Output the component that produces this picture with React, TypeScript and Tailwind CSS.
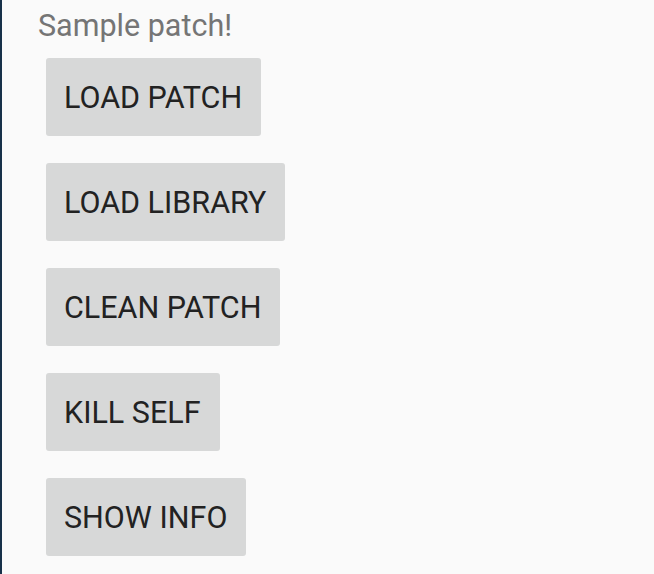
const buttons = ["LOAD PATCH", "LOAD LIBRARY", "CLEAN PATCH", "KILL SELF", "SHOW INFO"];

export default function App() {
  return (
    <div className="h-[574px] w-[654px] overflow-hidden border-l-2 border-[#173149] bg-[#fafafa] font-['Roboto',sans-serif]">
      <p className="pl-[36px] pt-[6px] text-[30.5px] leading-[40px] text-[#757575]">Sample patch!</p>
      <div className="mt-[12px] flex flex-col items-start gap-[27px] pl-[44px]">
        {buttons.map((label) => (
          <button
            key={label}
            className="h-[78px] rounded-[3px] bg-[#d7d8d8] pl-[18px] pr-[19px] pt-[2px] text-[30.5px] text-[#222222]"
          >
            {label}
          </button>
        ))}
      </div>
    </div>
  );
}
